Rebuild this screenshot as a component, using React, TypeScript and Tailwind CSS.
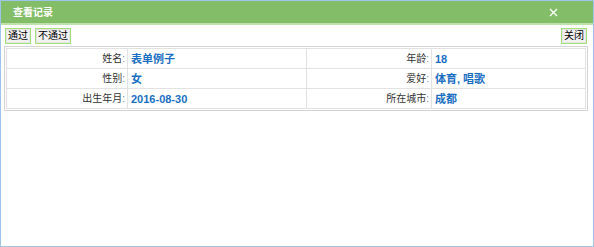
import React from "react";

const ROWS: [string, string, string, string][] = [
  ["姓名", "表单例子", "年龄", "18"],
  ["性别", "女", "爱好", "体育, 唱歌"],
  ["出生年月", "2016-08-30", "所在城市", "成都"],
];

const font = "font-['Liberation_Sans','Noto_Sans_CJK_SC',sans-serif]";

function Btn({ label }: { label: string }) {
  return (
    <button className="h-[16px] px-[2px] border border-[#a6e07c] bg-[#f2f2f2] text-[10px] leading-[14px] text-black shadow-[inset_0_0_0_1px_#e4e4e4]">
      {label}
    </button>
  );
}

export default function App() {
  return (
    <div className={`w-[594px] h-[247px] bg-white border border-[#9dc4ea] flex flex-col ${font}`}>
      {/* Title bar */}
      <div className="h-[24px] bg-[#84bd68] border-b-2 border-[#bfe0ab] flex items-center justify-between pl-[12px] pr-[35px]">
        <span className="text-white text-[10px] font-bold">查看记录</span>
        <svg width="9" height="9" viewBox="0 0 9 9" className="mt-[1px]">
          <path d="M1 1L8 8M8 1L1 8" stroke="#fff" strokeWidth="1.3" />
        </svg>
      </div>

      {/* Toolbar */}
      <div className="flex items-center justify-between pl-[4px] pr-[6px] pt-[3px]">
        <div className="flex gap-[4px]">
          <Btn label="通过" />
          <Btn label="不通过" />
        </div>
        <Btn label="关闭" />
      </div>

      {/* Detail table */}
      <div className="mt-[2px] ml-[3px] mr-[5px] border border-[#d4d4d4] p-px">
        <table className="w-full border-collapse text-[10px]">
          <tbody>
            {ROWS.map(([l1, v1, l2, v2], i) => (
              <tr key={i}>
                <td className="h-[20px] p-0 w-[121px] border border-[#e2e2e2] text-right text-[#333] pr-[2px] leading-[18px] whitespace-nowrap">
                  {l1}<span className="text-[#6a8aa8]">:</span>
                </td>
                <td className="h-[20px] p-0 w-[179px] border border-[#e2e2e2] pl-[3px] font-bold text-[11px] leading-[18px] text-[#1b6fc2] whitespace-nowrap">
                  {v1}
                </td>
                <td className="h-[20px] p-0 w-[125px] border border-[#e2e2e2] text-right text-[#333] pr-[2px] leading-[18px] whitespace-nowrap">
                  {l2}<span className="text-[#6a8aa8]">:</span>
                </td>
                <td className="h-[20px] p-0 border border-[#e2e2e2] pl-[3px] font-bold text-[11px] leading-[18px] text-[#1b6fc2] whitespace-nowrap">
                  {v2}
                </td>
              </tr>
            ))}
          </tbody>
        </table>
      </div>
    </div>
  );
}
